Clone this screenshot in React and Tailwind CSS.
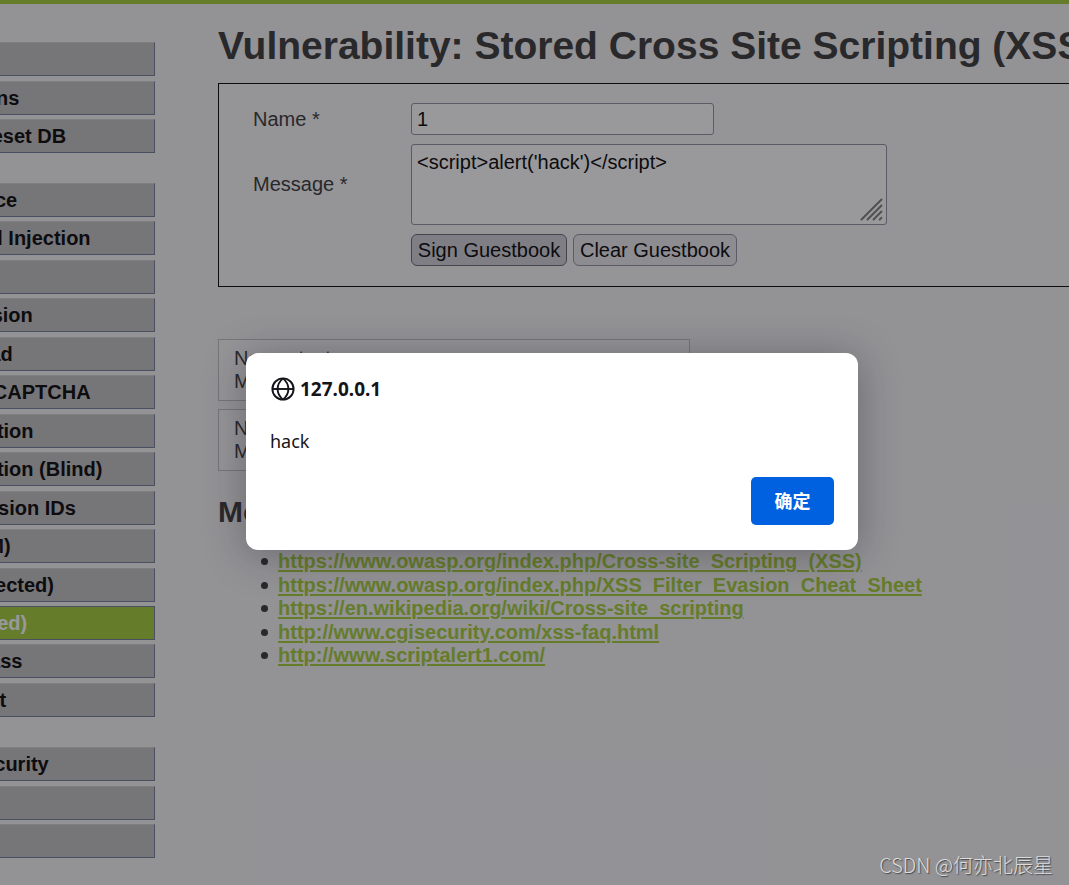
import React from "react";

const MENU = [
  { height: "h-[111px]", items: ["Home", "Instructions", "Setup / Reset DB"] },
  {
    height: "h-[534px]",
    items: [
      "Brute Force",
      "Command Injection",
      "CSRF",
      "File Inclusion",
      "File Upload",
      "Insecure CAPTCHA",
      "SQL Injection",
      "SQL Injection (Blind)",
      "Weak Session IDs",
      "XSS (DOM)",
      "XSS (Reflected)",
      "XSS (Stored)",
      "CSP Bypass",
      "JavaScript",
    ],
  },
  { height: "h-[111px]", items: ["DVWA Security", "PHP Info", "About"] },
];

const ACTIVE = "XSS (Stored)";

const LINKS = [
  "https://www.owasp.org/index.php/Cross-site_Scripting_(XSS)",
  "https://www.owasp.org/index.php/XSS_Filter_Evasion_Cheat_Sheet",
  "https://en.wikipedia.org/wiki/Cross-site_scripting",
  "http://www.cgisecurity.com/xss-faq.html",
  "http://www.scriptalert1.com/",
];

const ENTRIES = [
  { name: "test", message: "This is a test comment." },
  { name: "1", message: "" },
];

function Sidebar() {
  return (
    <nav className="-ml-[103px] flex w-[258px] shrink-0 flex-col gap-[30px] pt-[38px]">
      {MENU.map((group) => (
        <ul key={group.items[0]} className={`flex flex-col justify-between ${group.height}`}>
          {group.items.map((label) => (
            <li key={label}>
              <a
                href="#"
                className={
                  label === ACTIVE
                    ? "block h-[34px] border border-[#717a98] bg-[#a1cc33] pl-[7px] text-[20px] leading-[32px] font-bold text-white"
                    : "block h-[34px] border border-t-[#d0d0d0] border-r-[#717a98] border-b-[#717a98] border-l-[#d0d0d0] bg-[#c0c0c0] pl-[7px] text-[20px] leading-[32px] font-bold text-black"
                }
              >
                {label}
              </a>
            </li>
          ))}
        </ul>
      ))}
    </nav>
  );
}

function GuestbookForm() {
  return (
    <form
      className="mt-[14px] grid grid-cols-[158px_1fr] items-center gap-y-[9px] border border-black bg-[#f8f8f8] pt-[19px] pb-[20px] pl-[34px]"
      onSubmit={(e) => e.preventDefault()}
    >
      <label htmlFor="name">Name *</label>
      <input
        id="name"
        type="text"
        defaultValue="1"
        className="h-[32px] w-[303px] rounded-[3px] border border-[#8f8f9d] bg-white px-[5px] text-black"
      />
      <label htmlFor="message">Message *</label>
      <div className="relative h-[81px] w-[476px]">
        <textarea
          id="message"
          defaultValue="<script>alert('hack')</script>"
          className="block h-full w-full resize-none rounded-[3px] border border-[#8f8f9d] bg-white px-[5px] py-[5px] leading-[24px] text-black"
        />
        <svg
          className="absolute right-[4px] bottom-[4px] h-[23px] w-[23px]"
          viewBox="0 0 23 23"
          stroke="#787878"
          strokeWidth="1.9"
          strokeLinecap="round"
          aria-hidden="true"
        >
          <path d="M1.5 21.5 21.5 1.5M7.5 21.5 21.5 7.5M13.5 21.5 21.5 13.5M19.7 21.5 21.5 19.7" />
        </svg>
      </div>
      <div className="col-start-2 flex gap-[6px]">
        <button
          type="submit"
          className="h-[32px] w-[156px] rounded-[6px] border border-[#676774] bg-[#d0d0d7] text-black"
        >
          Sign Guestbook
        </button>
        <button
          type="button"
          className="h-[32px] w-[164px] rounded-[6px] border border-[#8f8f9d] bg-[#e9e9ed] text-black"
        >
          Clear Guestbook
        </button>
      </div>
    </form>
  );
}

function AlertDialog() {
  return (
    <div
      role="alertdialog"
      aria-labelledby="alert-title"
      aria-describedby="alert-text"
      className="absolute top-[353px] left-[246px] flex h-[197px] w-[612px] flex-col rounded-[12px] bg-white px-[24px] pt-[24px] pb-[25px] font-['Noto_Sans','Noto_Sans_CJK_SC',sans-serif] text-[18px] text-[#15141a] shadow-[0_4px_40px_rgba(28,27,34,0.35)]"
    >
      <div className="flex items-center gap-[5px]">
        <svg className="ml-px h-[24px] w-[24px]" viewBox="0 0 24 24" fill="none" stroke="#15141a" strokeWidth="1.9" aria-hidden="true">
          <circle cx="12" cy="12" r="10.6" />
          <path d="M12 1.4C4.8 7.5 4.8 16.5 12 22.6M12 1.4C19.2 7.5 19.2 16.5 12 22.6" />
          <path d="M1.4 12H22.6" />
        </svg>
        <h2 id="alert-title" className="text-[19px] leading-[24px] font-bold">
          127.0.0.1
        </h2>
      </div>
      <p id="alert-text" className="mt-[27px] leading-[26px]">
        hack
      </p>
      <button
        type="button"
        className="mt-auto h-[48px] w-[83px] self-end rounded-[5px] bg-[#0061e0] font-bold text-white"
      >
        确定
      </button>
    </div>
  );
}

export default function App() {
  return (
    <div className="relative min-h-screen overflow-hidden bg-[#f4f4f4] font-['Liberation_Sans',Arial,sans-serif] text-[20px] leading-[23px] text-[#333]">
      <div className="h-[4px] bg-[#a1cc33]" />
      <div className="flex">
        <Sidebar />
        <main className="-mr-[40px] ml-[63px] min-w-0 flex-1 pt-[19px]">
          <h1 className="text-[39px] leading-[46px] font-bold whitespace-nowrap">
            Vulnerability: Stored Cross Site Scripting (XSS)
          </h1>
          <GuestbookForm />
          <div className="mt-[52px] flex flex-col gap-[8px]">
            {ENTRIES.map((entry) => (
              <div
                key={entry.name}
                className="h-[62px] w-[472px] border border-[#c0c0c0] bg-[#f8f8f8] px-[15px] py-[7px]"
              >
                <p>Name: {entry.name}</p>
                <p>Message: {entry.message}</p>
              </div>
            ))}
          </div>
          <h2 className="mt-[23px] text-[30px] leading-[36px] font-bold">More Information</h2>
          <ul className="mt-[20px] flex h-[117px] flex-col justify-between pl-[43px]">
            {LINKS.map((link) => (
              <li
                key={link}
                className="flex items-center gap-[10px] before:size-[7px] before:shrink-0 before:rounded-full before:bg-[#333]"
              >
                <a href={link} className="font-bold text-[#a1cc33] underline decoration-2 underline-offset-2">
                  {link}
                </a>
              </li>
            ))}
          </ul>
        </main>
      </div>
      <div className="absolute inset-0 bg-[#1c1b22]/45" />
      <AlertDialog />
      <p className="absolute right-[16px] bottom-[8px] font-['Noto_Sans_CJK_SC',sans-serif] text-[20px] leading-[24px] font-light text-[#dcdcdc] [text-shadow:1px_1px_1px_rgba(40,40,40,0.7)]">
        CSDN @何亦北辰星
      </p>
    </div>
  );
}
